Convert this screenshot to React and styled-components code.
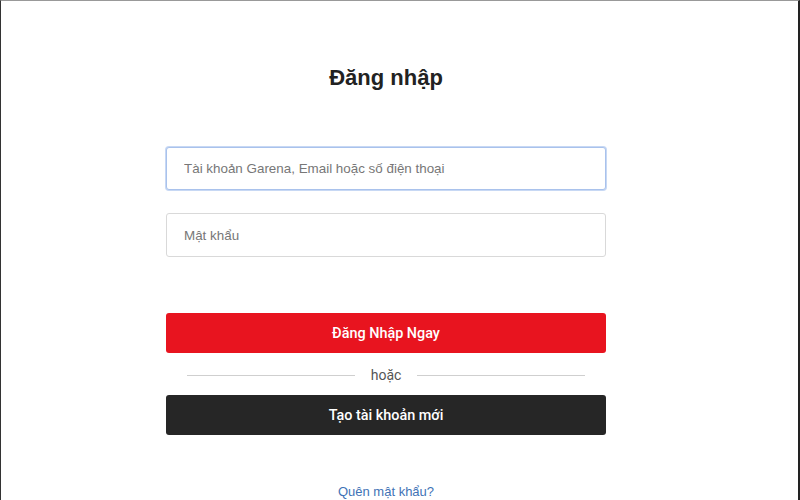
import React from 'react';
import styled, { createGlobalStyle } from 'styled-components';

const Global = createGlobalStyle`
  html, body {
    margin: 0;
    padding: 0;
    background: #ffffff;
    overflow: hidden;
  }
  * { box-sizing: border-box; }
`;

const Frame = styled.div`
  width: 800px;
  height: 500px;
  border-left: 1px solid #333;
  border-top: 1px solid #999;
  border-right: 2px solid #222;
  display: flex;
  flex-direction: column;
  align-items: flex-start;
  padding-left: 165px;
  font-family: "Liberation Sans", Arial, sans-serif;
`;

const Form = styled.div`
  width: 440px;
  display: flex;
  flex-direction: column;
`;

const Title = styled.h1`
  margin: 64px 0 0;
  font-size: 22px;
  line-height: 26px;
  font-weight: bold;
  color: #222;
  text-align: center;
`;

const Input = styled.input`
  width: 100%;
  height: ${p => p.$h || 44}px;
  margin-top: ${p => p.$top}px;
  border: 1px solid ${p => (p.$focus ? '#a9c2ec' : '#d9d9d9')};
  box-shadow: ${p => (p.$focus ? '0 0 0 1px #c7d8f4' : 'none')};
  border-radius: 3px;
  padding: 0 17px;
  font-family: "Liberation Sans", Arial, sans-serif;
  font-size: 13.4px;
  color: #333;
  outline: none;
  &::placeholder { color: #777; }
`;

const Button = styled.button`
  width: 100%;
  height: 40px;
  margin-top: ${p => p.$top}px;
  border: none;
  border-radius: 3px;
  background: ${p => p.$bg};
  color: #fff;
  font-family: Roboto, "Liberation Sans", sans-serif;
  font-weight: 500;
  font-size: 14.4px;
  cursor: pointer;
`;

const Divider = styled.div`
  display: flex;
  align-items: center;
  gap: 16px;
  padding: 0 21px;
  height: 42px;
  padding-top: 2px;
  color: #555;
  font-family: Roboto, "Liberation Sans", sans-serif;
  font-size: 14px;
  &::before, &::after {
    content: '';
    flex: 1;
    height: 1px;
    background: #cfcfcf;
  }
`;

const Forgot = styled.a`
  margin-top: 49px;
  text-align: center;
  color: #3f73b6;
  font-size: 13px;
  text-decoration: none;
`;

export default function App() {
  return (
    <>
      <Global />
      <Frame>
        <Form>
          <Title>Đăng nhập</Title>
          <Input $top={56} $h={43} $focus autoFocus placeholder="Tài khoản Garena, Email hoặc số điện thoại" />
          <Input $top={23} type="password" placeholder="Mật khẩu" />
          <Button $top={56} $bg="#e8141f">Đăng Nhập Ngay</Button>
          <Divider>hoặc</Divider>
          <Button $top={0} $bg="#262626">Tạo tài khoản mới</Button>
          <Forgot href="#">Quên mật khẩu?</Forgot>
        </Form>
      </Frame>
    </>
  );
}
